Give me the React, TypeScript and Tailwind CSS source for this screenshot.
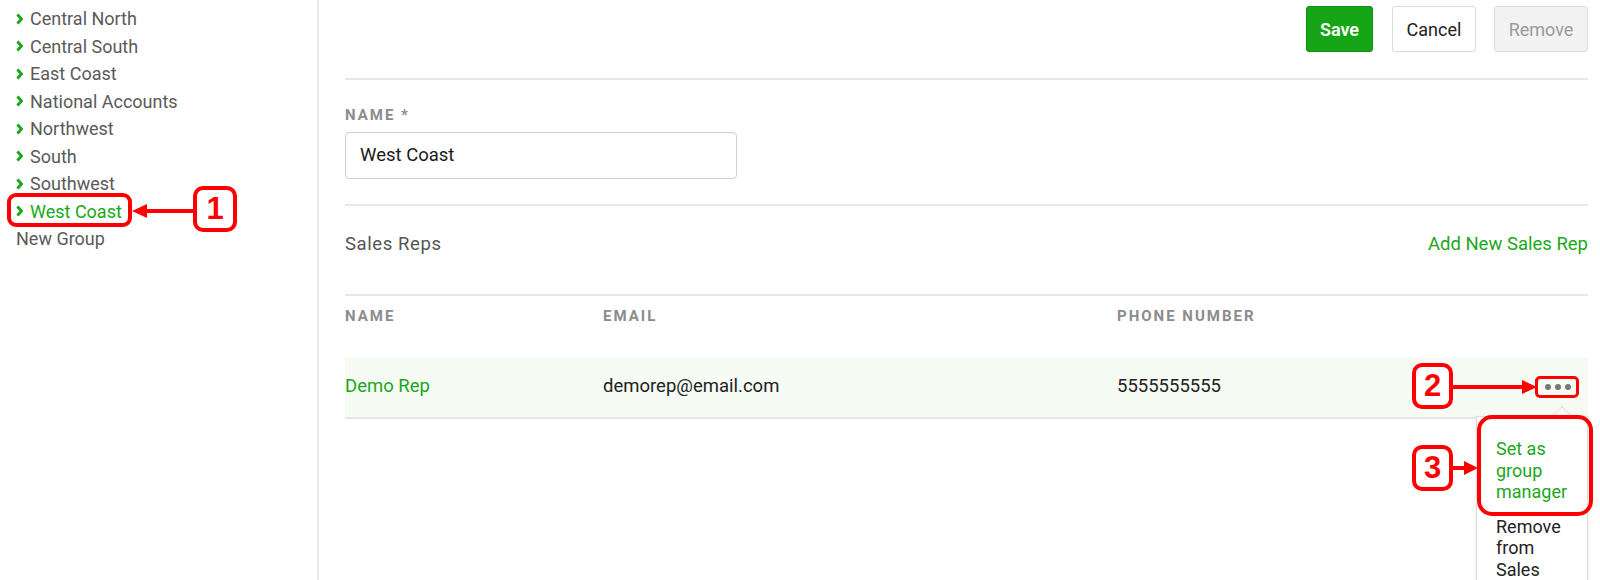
import React from "react";

const groups = [
  "Central North",
  "Central South",
  "East Coast",
  "National Accounts",
  "Northwest",
  "South",
  "Southwest",
  "West Coast",
];

function Chevron() {
  return (
    <svg width="7" height="12" viewBox="0 0 7 12" className="shrink-0">
      <path d="M1.4 1.6 L5.4 6 L1.4 10.4" fill="none" stroke="#1aa81a" strokeWidth="2.9" />
    </svg>
  );
}

export default function App() {
  return (
    <div className="relative w-[1600px] h-[580px] overflow-hidden bg-white flex font-['Roboto',sans-serif] text-[18px]">
      <aside className="w-[319px] shrink-0 border-r-2 border-[#e8e8e8] pl-[16px] pt-[5px]">
        {groups.map((g) => (
          <div key={g} className="h-[27.5px] flex items-center gap-[7px]">
            <Chevron />
            <span className={g === "West Coast" ? "text-[#1aa81a]" : "text-[#5a5a5a]"}>{g}</span>
          </div>
        ))}
        <div className="h-[27.5px] flex items-center text-[#5a5a5a]">New Group</div>
      </aside>

      <main className="flex-1 pl-[26px] pr-[12px] text-[18.5px]">
        <div className="h-[78px] pt-[6px] flex justify-end text-[18px]">
          <button className="w-[67px] h-[46px] rounded-[3px] bg-[#16a516] border border-[#129012] text-white font-semibold">
            Save
          </button>
          <button className="ml-[19px] w-[84px] h-[46px] rounded-[3px] bg-white border border-[#dcdcdc] text-[#222]">
            Cancel
          </button>
          <button className="ml-[18px] w-[94px] h-[46px] rounded-[3px] bg-[#f2f2f2] border border-[#dcdcdc] text-[#9a9a9a]">
            Remove
          </button>
        </div>
        <div className="h-[2px] bg-[#e8e8e8]" />

        <div className="pt-[26px] pb-[25px]">
          <div className="text-[15px] leading-[18px] font-bold tracking-[2px] text-[#8c8c8c]">NAME *</div>
          <div className="mt-[8px] w-[392px] h-[47px] border border-[#cfcfcf] rounded-[4px] flex items-center px-[14px] text-[#1a1a1a]">
            West Coast
          </div>
        </div>
        <div className="h-[2px] bg-[#e8e8e8]" />

        <div className="h-[88px] pt-[26px] flex justify-between leading-[24px]">
          <span className="text-[#555] tracking-[0.6px]">Sales Reps</span>
          <span className="text-[#1aa81a]">Add New Sales Rep</span>
        </div>
        <div className="h-[2px] bg-[#e8e8e8]" />

        <div className="h-[61px] pt-[11px] grid grid-cols-[258px_514px_1fr] text-[15px] leading-[18px] font-bold tracking-[2px] text-[#8c8c8c]">
          <div>NAME</div>
          <div>EMAIL</div>
          <div>PHONE NUMBER</div>
        </div>
        <div className="h-[62px] bg-[#f6fbf4] border-b-2 border-[#e6e6e6] grid grid-cols-[258px_514px_1fr_auto] items-center">
          <div className="text-[#1aa81a]">Demo Rep</div>
          <div className="text-[#222]">demorep@email.com</div>
          <div className="text-[#222]">5555555555</div>
          <div className="pr-[17px] flex gap-[4px]">
            <span className="w-[6px] h-[6px] rounded-full bg-[#777]" />
            <span className="w-[6px] h-[6px] rounded-full bg-[#777]" />
            <span className="w-[6px] h-[6px] rounded-full bg-[#777]" />
          </div>
        </div>
      </main>

      {/* dropdown menu */}
      <div className="absolute left-[1476px] top-[416px] w-[112px] h-[200px] bg-white border border-[#dddddd] shadow-[0_1px_4px_rgba(0,0,0,0.08)] text-[18px]">
        <div className="absolute left-[78px] top-[-8px] w-[14px] h-[14px] rotate-45 bg-white border-t border-l border-[#dddddd]" />
        <div className="relative pt-[21px] pl-[19px] pr-[18px] leading-[21.5px]">
          <div className="text-[#1aa81a]">Set as group manager</div>
          <div className="mt-[13px] text-[#222]">Remove from Sales Reps</div>
        </div>
      </div>

      {/* annotations */}
      <div className="absolute left-[7px] top-[193px] w-[125px] h-[34px] border-4 border-[#ff0000] rounded-[9px]" />
      <svg className="absolute left-[132px] top-[203px]" width="61" height="16" viewBox="0 0 61 16">
        <line x1="13" y1="8" x2="61" y2="8" stroke="#ff0000" strokeWidth="4" />
        <polygon points="0,8 15,1 15,15" fill="#ff0000" />
      </svg>
      <div className="absolute left-[193px] top-[186px] w-[44px] h-[46px] bg-white border-4 border-[#ff0000] rounded-[10px] flex items-center justify-center font-['Liberation_Sans',Arial,sans-serif] font-bold text-[31px] text-[#ff0000]">
        1
      </div>

      <div className="absolute left-[1412px] top-[363px] w-[41px] h-[46px] bg-white border-4 border-[#ff0000] rounded-[10px] flex items-center justify-center font-['Liberation_Sans',Arial,sans-serif] font-bold text-[31px] text-[#ff0000]">
        2
      </div>
      <svg className="absolute left-[1453px] top-[379px]" width="84" height="16" viewBox="0 0 84 16">
        <line x1="0" y1="8" x2="71" y2="8" stroke="#ff0000" strokeWidth="4" />
        <polygon points="84,8 69,1 69,15" fill="#ff0000" />
      </svg>
      <div className="absolute left-[1535px] top-[376px] w-[44px] h-[22px] border-[3px] border-[#ff0000] rounded-[5px]" />

      <div className="absolute left-[1412px] top-[445px] w-[41px] h-[46px] bg-white border-4 border-[#ff0000] rounded-[10px] flex items-center justify-center font-['Liberation_Sans',Arial,sans-serif] font-bold text-[31px] text-[#ff0000]">
        3
      </div>
      <svg className="absolute left-[1453px] top-[460px]" width="25" height="16" viewBox="0 0 25 16">
        <line x1="0" y1="8" x2="13" y2="8" stroke="#ff0000" strokeWidth="4" />
        <polygon points="25,8 11,1 11,15" fill="#ff0000" />
      </svg>
      <div className="absolute left-[1477px] top-[415px] w-[116px] h-[101px] border-4 border-[#ff0000] rounded-[15px]" />
    </div>
  );
}
